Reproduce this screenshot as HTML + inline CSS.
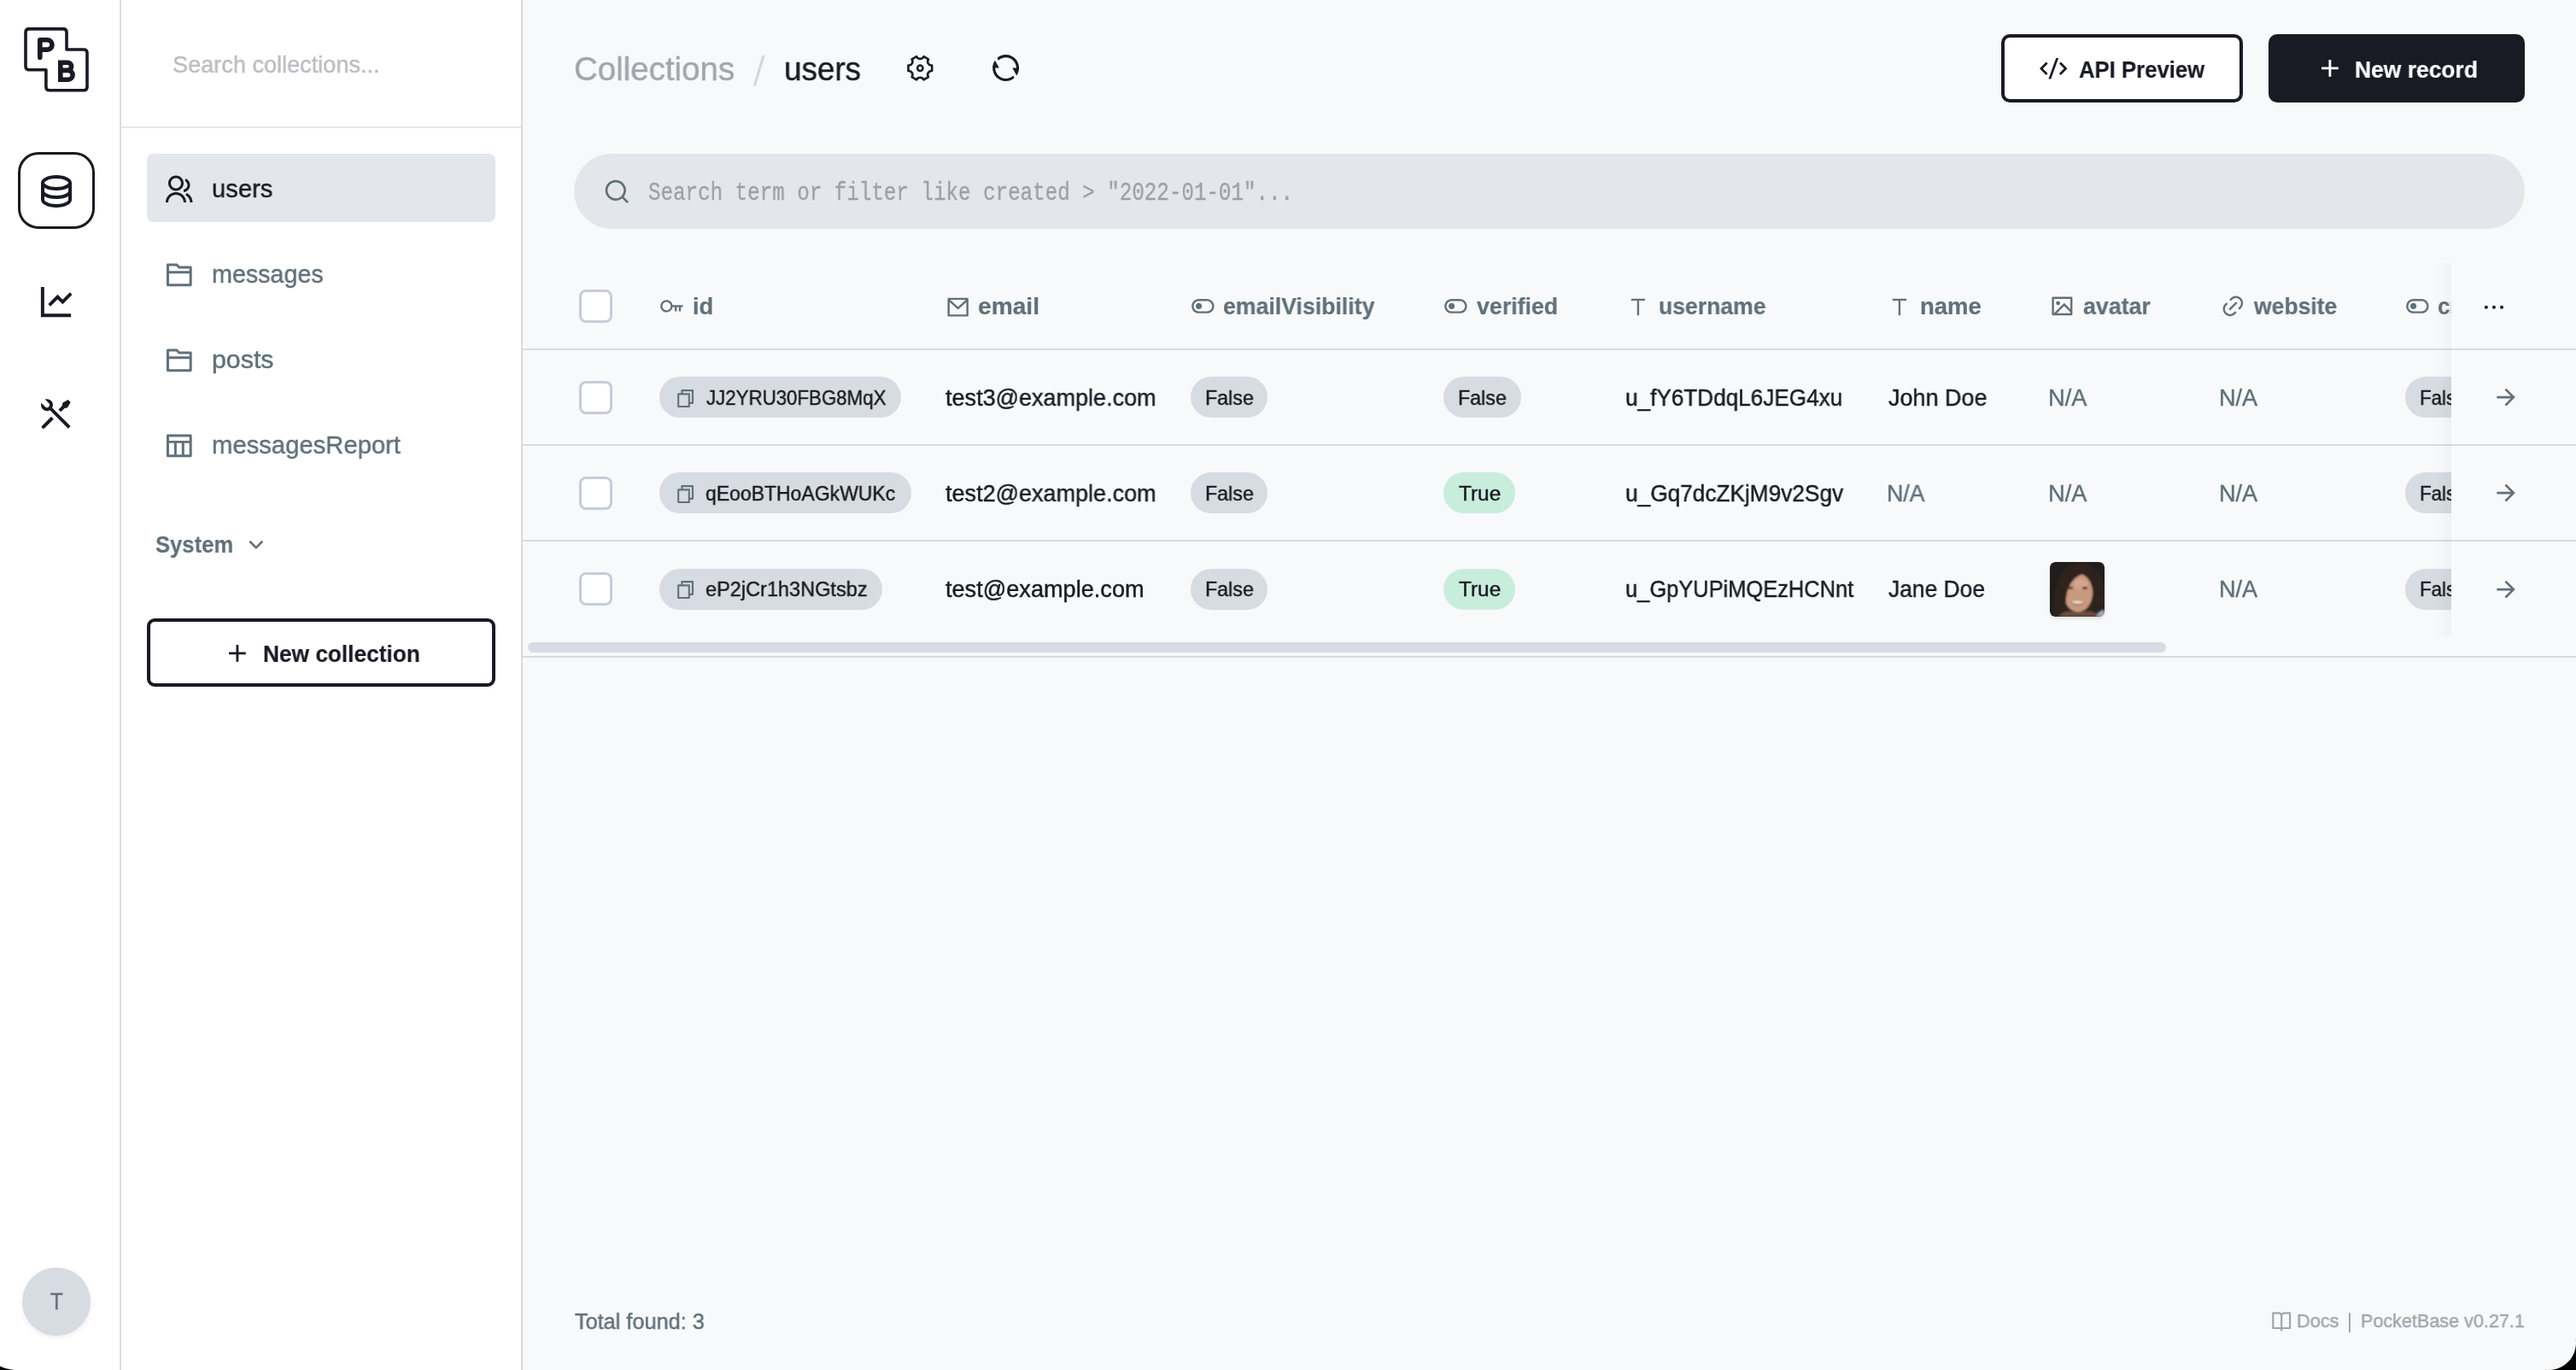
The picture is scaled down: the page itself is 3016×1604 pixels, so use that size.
<!DOCTYPE html>
<html><head><meta charset="utf-8"><title>PocketBase</title>
<style>
html,body{margin:0;padding:0;width:3016px;height:1604px;overflow:hidden;background:#f8f9fa}
#root{position:relative;width:3016px;height:1604px;overflow:hidden}
.b{position:absolute}
@media (max-width:2000px){html,body{width:1508px;height:802px} #root{zoom:0.5}}
.t{position:absolute;white-space:nowrap;font-family:"Liberation Sans",sans-serif;will-change:transform}
</style></head><body><div id="root">
<div class="b" style="left:0px;top:0px;width:3016px;height:1604px;background:#f8f9fa"></div>
<div class="b" style="left:0px;top:0px;width:140px;height:1604px;background:#fff"></div>
<div class="b" style="left:140px;top:0px;width:2px;height:1604px;background:#d7dce2"></div>
<div class="b" style="left:142px;top:0px;width:468px;height:1604px;background:#fff"></div>
<div class="b" style="left:610px;top:0px;width:2px;height:1604px;background:#d7dce2"></div>
<div class="b" style="left:142px;top:148px;width:468px;height:2px;background:#e3e7eb"></div>
<svg class="b" style="left:26px;top:30px" width="80" height="80" viewBox="26 30 80 80"><path d="M34 33.9H74Q78 33.9 78 37.9V58H98Q102 58 102 62V101.8Q102 105.8 98 105.8H57.9Q53.9 105.8 53.9 101.8V81.7H34Q30 81.7 30 77.7V37.9Q30 33.9 34 33.9Z" fill="none" stroke="#1a1a24" stroke-width="3.6" stroke-linejoin="round"/><path d="M46.8,67.2 V46.8 H55.35 A5.65,5.65 0 0 1 55.35,58.1 H46.8" fill="none" stroke="#1a1a24" stroke-width="5.6" stroke-linecap="round" stroke-linejoin="round"/><path d="M70.8,73.2 H79 A4.6,4.6 0 0 1 79,82.4 H79.7 A5.4,5.4 0 0 1 79.7,93.2 H70.8 Z M70.8,82.4 H80" fill="none" stroke="#1a1a24" stroke-width="5.6" stroke-linejoin="miter"/></svg>
<div class="b" style="left:21px;top:178px;width:90px;height:90px;box-sizing:border-box;border:3.6px solid #1a1a24;border-radius:24px"></div>
<svg class="b" style="left:42px;top:199.3px;" width="48.0" height="48.0" viewBox="0 0 24 24"><path fill="#1a1a24" d="M5 12.5C5 12.8134 5.46101 13.3584 6.53047 13.8931C7.91405 14.5849 9.87677 15 12 15C14.1232 15 16.0859 14.5849 17.4695 13.8931C18.539 13.3584 19 12.8134 19 12.5V10.3287C17.35 11.3482 14.8273 12 12 12C9.17273 12 6.65 11.3482 5 10.3287V12.5ZM19 15.3287C17.35 16.3482 14.8273 17 12 17C9.17273 17 6.65 16.3482 5 15.3287V17.5C5 17.8134 5.46101 18.3584 6.53047 18.8931C7.91405 19.5849 9.87677 20 12 20C14.1232 20 16.0859 19.5849 17.4695 18.8931C18.539 18.3584 19 17.8134 19 17.5V15.3287ZM3 17.5V7.5C3 5.01472 7.02944 3 12 3C16.9706 3 21 5.01472 21 7.5V17.5C21 19.9853 16.9706 22 12 22C7.02944 22 3 19.9853 3 17.5ZM12 10C14.1232 10 16.0859 9.58492 17.4695 8.89313C18.539 8.35836 19 7.81344 19 7.5C19 7.18656 18.539 6.64164 17.4695 6.10687C16.0859 5.41508 14.1232 5 12 5C9.87677 5 7.91405 5.41508 6.53047 6.10687C5.46101 6.64164 5 7.18656 5 7.5C5 7.81344 5.46101 8.35836 6.53047 8.89313C7.91405 9.58492 9.87677 10 12 10Z"/></svg>
<svg class="b" style="left:41.6px;top:330px;" width="47.04" height="47.04" viewBox="0 0 24 24"><path fill="#1a1a24" d="M5 3V19H21V21H3V3H5ZM20.2929 6.29289L21.7071 7.70711L16 13.4142L13 10.415L8.70711 14.7071L7.29289 13.2929L13 7.58579L16 10.585L20.2929 6.29289Z"/></svg>
<svg class="b" style="left:42.4px;top:460.7px;" width="48.0" height="48.0" viewBox="0 0 24 24"><path fill="#1a1a24" d="M5.32943 3.27158C6.56252 2.8332 7.9923 3.10749 8.97927 4.09446C10.1002 5.21537 10.3019 6.90741 9.58451 8.23385L20.2955 18.9449L18.8813 20.3591L8.17024 9.64809C6.84371 10.3654 5.15167 10.1637 4.03076 9.04278C3.04355 8.05557 2.76938 6.62537 3.20826 5.39208L5.44409 7.62791C6.02988 8.2137 6.97963 8.2137 7.56541 7.62791C8.1512 7.04213 8.1512 6.09238 7.56541 5.50659L5.32943 3.27158ZM15.6968 5.30737L18.8788 3.53963L20.293 4.95384L18.5252 8.13582L16.7574 8.49937L14.6361 10.6207L13.2219 9.20648L15.3432 7.08516L15.6968 5.30737ZM8.97927 13.4168L10.3935 14.831L5.09018 20.1343C4.69966 20.5248 4.06649 20.5248 3.67597 20.1343C3.31334 19.7717 3.28744 19.2 3.59826 18.8075L3.67597 18.7201L8.97927 13.4168Z"/></svg>
<div class="b" style="left:26px;top:1484px;width:80px;height:80px;border-radius:50%;background:#d7dce2;box-shadow:0 2px 6px rgba(0,0,0,0.08)"></div>
<div class="t" style="left:58.52px;top:1510.00px;font-size:27.5px;line-height:27.5px;color:#617079;font-weight:400;font-family:'Liberation Sans', sans-serif;transform:scaleX(0.8676);transform-origin:0 0;-webkit-text-stroke:0.45px #617079;">T</div>
<div class="t" style="left:201.78px;top:62.00px;font-size:28px;line-height:28px;color:#b9bdc2;font-weight:400;font-family:'Liberation Sans', sans-serif;transform:scaleX(0.9681);transform-origin:0 0;-webkit-text-stroke:0.45px #b9bdc2;">Search collections...</div>
<div class="b" style="left:172px;top:180px;width:408px;height:80px;background:#e3e7eb;border-radius:8px"></div>
<svg class="b" style="left:191.2px;top:204px;" width="36.0" height="36.0" viewBox="0 0 24 24"><path fill="#1a1a24" d="M2 22C2 17.5817 5.58172 14 10 14C14.4183 14 18 17.5817 18 22H16C16 18.6863 13.3137 16 10 16C6.68629 16 4 18.6863 4 22H2ZM10 13C6.685 13 4 10.315 4 7C4 3.685 6.685 1 10 1C13.315 1 16 3.685 16 7C16 10.315 13.315 13 10 13ZM10 11C12.21 11 14 9.21 14 7C14 4.79 12.21 3 10 3C7.79 3 6 4.79 6 7C6 9.21 7.79 11 10 11ZM18.2837 14.7028C21.0644 15.9561 23 18.752 23 22H21C21 19.564 19.5483 17.4671 17.4628 16.5271L18.2837 14.7028ZM17.5962 3.41321C19.5944 4.23703 21 6.20361 21 8.5C21 11.3702 18.8042 13.7252 16 13.9776V11.9646C17.6967 11.7222 19 10.264 19 8.5C19 7.11935 18.2016 5.92603 17.041 5.35635L17.5962 3.41321Z"/></svg>
<div class="t" style="left:247.95px;top:206.00px;font-size:30.2px;line-height:30.2px;color:#1a1a24;font-weight:400;font-family:'Liberation Sans', sans-serif;transform:scaleX(0.9665);transform-origin:0 0;-webkit-text-stroke:0.45px #1a1a24;">users</div>
<svg class="b" style="left:192px;top:303.5px;" width="35.64" height="35.64" viewBox="0 0 24 24"><path fill="#617079" d="M12.4142 5H21C21.5523 5 22 5.44772 22 6V20C22 20.5523 21.5523 21 21 21H3C2.44772 21 2 20.5523 2 20V4C2 3.44772 2.44772 3 3 3H10.4142L12.4142 5ZM20 11H4V19H20V11ZM20 9V7H11.5858L9.58579 5H4V9H20Z"/></svg>
<div class="t" style="left:247.94px;top:306.00px;font-size:30.2px;line-height:30.2px;color:#617079;font-weight:400;font-family:'Liberation Sans', sans-serif;transform:scaleX(0.9496);transform-origin:0 0;-webkit-text-stroke:0.45px #617079;">messages</div>
<svg class="b" style="left:192px;top:403.5px;" width="35.64" height="35.64" viewBox="0 0 24 24"><path fill="#617079" d="M12.4142 5H21C21.5523 5 22 5.44772 22 6V20C22 20.5523 21.5523 21 21 21H3C2.44772 21 2 20.5523 2 20V4C2 3.44772 2.44772 3 3 3H10.4142L12.4142 5ZM20 11H4V19H20V11ZM20 9V7H11.5858L9.58579 5H4V9H20Z"/></svg>
<div class="t" style="left:247.53px;top:406.00px;font-size:30.2px;line-height:30.2px;color:#617079;font-weight:400;font-family:'Liberation Sans', sans-serif;transform:scaleX(1.0049);transform-origin:0 0;-webkit-text-stroke:0.45px #617079;">posts</div>
<svg class="b" style="left:192px;top:503.5px;" width="35.64" height="35.64" viewBox="0 0 24 24"><path fill="#617079" d="M4 8H20V5H4V8ZM14 19V10H10V19H14ZM16 19H20V10H16V19ZM8 19V10H4V19H8ZM3 3H21C21.5523 3 22 3.44772 22 4V20C22 20.5523 21.5523 21 21 21H3C2.44772 21 2 20.5523 2 20V4C2 3.44772 2.44772 3 3 3Z"/></svg>
<div class="t" style="left:247.90px;top:506.00px;font-size:30.2px;line-height:30.2px;color:#617079;font-weight:400;font-family:'Liberation Sans', sans-serif;transform:scaleX(0.9684);transform-origin:0 0;-webkit-text-stroke:0.45px #617079;">messagesReport</div>
<div class="t" style="left:182.23px;top:624.00px;font-size:27.9px;line-height:27.9px;color:#617079;font-weight:700;font-family:'Liberation Sans', sans-serif;transform:scaleX(0.9183);transform-origin:0 0;-webkit-text-stroke:0.2px #617079;">System</div>
<svg class="b" style="left:283.6px;top:621.65px;" width="31.68" height="31.68" viewBox="0 0 24 24"><path fill="#617079" d="M11.9999 13.1714L16.9497 8.22168L18.3639 9.63589L11.9999 15.9999L5.63599 9.63589L7.0502 8.22168L11.9999 13.1714Z"/></svg>
<div class="b" style="left:172px;top:724px;width:408px;height:80px;box-sizing:border-box;border:4px solid #1a1a24;border-radius:9px;background:#fff"></div>
<svg class="b" style="left:260.5px;top:747.5px;" width="33.839999999999996" height="33.839999999999996" viewBox="0 0 24 24"><path fill="#1a1a24" d="M11 11V5H13V11H19V13H13V19H11V13H5V11H11Z"/></svg>
<div class="t" style="left:307.79px;top:752.00px;font-size:27.8px;line-height:27.8px;color:#1a1a24;font-weight:700;font-family:'Liberation Sans', sans-serif;transform:scaleX(0.9444);transform-origin:0 0;-webkit-text-stroke:0.2px #1a1a24;">New collection</div>
<div class="t" style="left:672.18px;top:61.00px;font-size:39.5px;line-height:39.5px;color:#a0a6ac;font-weight:400;font-family:'Liberation Sans', sans-serif;transform:scaleX(0.9737);transform-origin:0 0;-webkit-text-stroke:0.45px #a0a6ac;">Collections</div>
<svg class="b" style="left:878px;top:62px" width="22" height="42" viewBox="878 62 22 42"><polygon points="892.3,65 895.7,65 884.9,100.4 882,100.4" fill="#d3d7db"/></svg>
<div class="t" style="left:918.01px;top:61.00px;font-size:39.5px;line-height:39.5px;color:#1a1a24;font-weight:400;font-family:'Liberation Sans', sans-serif;transform:scaleX(0.9317);transform-origin:0 0;-webkit-text-stroke:0.45px #1a1a24;">users</div>
<svg class="b" style="left:1055px;top:58px" width="45" height="45" viewBox="1055 58 45 45"><path d="M1091.15,76.60 L1091.15,83.00 A4.55,4.55 0 0 0 1087.00,90.19 L1081.45,93.39 A4.55,4.55 0 0 0 1073.15,93.39 L1067.60,90.19 A4.55,4.55 0 0 0 1063.45,83.00 L1063.45,76.60 A4.55,4.55 0 0 0 1067.60,69.41 L1073.15,66.21 A4.55,4.55 0 0 0 1081.45,66.21 L1087.00,69.41 A4.55,4.55 0 0 0 1091.15,76.60Z" fill="none" stroke="#1a1a24" stroke-width="2.6" stroke-linejoin="round"/><circle cx="1077.3" cy="79.8" r="3.2" fill="none" stroke="#1a1a24" stroke-width="2.5"/></svg>
<svg class="b" style="left:1159px;top:61.2px;" width="37.2" height="37.2" viewBox="0 0 24 24"><path fill="#1a1a24" d="M5.46257 4.43262C7.21556 2.91688 9.5007 2 12 2C17.5228 2 22 6.47715 22 12C22 14.1361 21.3302 16.1158 20.1892 17.7406L17 12H20C20 7.58172 16.4183 4 12 4C9.84982 4 7.89777 4.84827 6.46023 6.22842L5.46257 4.43262ZM18.5374 19.5674C16.7844 21.0831 14.4993 22 12 22C6.47715 22 2 17.5228 2 12C2 9.86386 2.66979 7.88416 3.8108 6.25944L7 12H4C4 16.4183 7.58172 20 12 20C14.1502 20 16.1022 19.1517 17.5398 17.7716L18.5374 19.5674Z"/></svg>
<div class="b" style="left:2343px;top:40px;width:283px;height:80px;box-sizing:border-box;border:4px solid #1a1a24;border-radius:10px;background:#fff"></div>
<svg class="b" style="left:2387.5px;top:63.95px;" width="32.496" height="32.496" viewBox="0 0 24 24"><path fill="#1a1a24" d="M24 12L18.3431 17.6569L16.9289 16.2426L21.1716 12L16.9289 7.75736L18.3431 6.34315L24 12ZM2.82843 12L7.07107 16.2426L5.65685 17.6569L0 12L5.65685 6.34315L7.07107 7.75736L2.82843 12ZM9.78845 21H7.66009L14.2116 3H16.3399L9.78845 21Z"/></svg>
<div class="t" style="left:2434.16px;top:68.00px;font-size:27.8px;line-height:27.8px;color:#1a1a24;font-weight:700;font-family:'Liberation Sans', sans-serif;transform:scaleX(0.9245);transform-origin:0 0;-webkit-text-stroke:0.2px #1a1a24;">API Preview</div>
<div class="b" style="left:2656px;top:40px;width:300px;height:80px;background:#1a1a24;border-radius:10px"></div>
<svg class="b" style="left:2711.2px;top:63.2px;" width="33.839999999999996" height="33.839999999999996" viewBox="0 0 24 24"><path fill="#fff" d="M11 11V5H13V11H19V13H13V19H11V13H5V11H11Z"/></svg>
<div class="t" style="left:2757.28px;top:68.00px;font-size:27.8px;line-height:27.8px;color:#fff;font-weight:700;font-family:'Liberation Sans', sans-serif;transform:scaleX(0.9509);transform-origin:0 0;-webkit-text-stroke:0.2px #fff;">New record</div>
<div class="b" style="left:672px;top:180px;width:2284px;height:88px;background:#e3e7eb;border-radius:44px"></div>
<svg class="b" style="left:706.1px;top:208.1px;" width="32.400000000000006" height="32.400000000000006" viewBox="0 0 24 24"><path fill="#617079" d="M18.031 16.6168L22.3137 20.8995L20.8995 22.3137L16.6168 18.031C15.0769 19.263 13.124 20 11 20C6.032 20 2 15.968 2 11C2 6.032 6.032 2 11 2C15.968 2 20 6.032 20 11C20 13.124 19.263 15.0769 18.031 16.6168ZM16.0247 15.8748C17.2475 14.6146 18 12.8956 18 11C18 7.1325 14.8675 4 11 4C7.1325 4 4 7.1325 4 11C4 14.8675 7.1325 18 11 18C12.8956 18 14.6146 17.2475 15.8748 16.0247L16.0247 15.8748Z"/></svg>
<div class="t" style="left:759.33px;top:212.00px;font-size:29.5px;line-height:29.5px;color:#9aa0a6;font-weight:400;font-family:'Liberation Mono', monospace;transform:scaleX(0.8202);transform-origin:0 0;-webkit-text-stroke:0.3px #9aa0a6;">Search term or filter like created &gt; "2022-01-01"...</div>
<div class="b" style="left:612px;top:408px;width:2404px;height:2px;background:#d7dce2"></div>
<div class="b" style="left:612px;top:520px;width:2404px;height:2px;background:#d7dce2"></div>
<div class="b" style="left:612px;top:632px;width:2404px;height:2px;background:#d7dce2"></div>
<div class="b" style="left:612px;top:768px;width:2404px;height:2px;background:#d7dce2"></div>
<div class="b" style="left:618px;top:752px;width:1918px;height:12px;background:#d7dce2;border-radius:6px"></div>
<div class="b" style="left:678px;top:338.5px;width:39px;height:39px;box-sizing:border-box;border:3.4px solid #c6cdd7;border-radius:8px;background:#fff"></div>
<svg class="b" style="left:772.2px;top:344.3px;" width="28.799999999999997" height="28.799999999999997" viewBox="0 0 24 24"><path fill="#617079" d="M12.917 13C12.441 15.837 9.973 18 7 18C3.686 18 1 15.314 1 12C1 8.686 3.686 6 7 6C9.973 6 12.441 8.163 12.917 11H23V13H21V17H19V13H17V17H15V13H12.917ZM7 16C9.209 16 11 14.209 11 12C11 9.791 9.209 8 7 8C4.791 8 3 9.791 3 12C3 14.209 4.791 16 7 16Z"/></svg>
<div class="t" style="left:811.08px;top:345.00px;font-size:27.1px;line-height:27.1px;color:#617079;font-weight:700;font-family:'Liberation Sans', sans-serif;transform:scaleX(1.0117);transform-origin:0 0;-webkit-text-stroke:0.2px #617079;">id</div>
<svg class="b" style="left:1106.6px;top:344.6px;" width="29.28" height="29.28" viewBox="0 0 24 24"><path fill="#617079" d="M3 3H21C21.5523 3 22 3.44772 22 4V20C22 20.5523 21.5523 21 21 21H3C2.44772 21 2 20.5523 2 20V4C2 3.44772 2.44772 3 3 3ZM20 7.23792L12.0718 14.338L4 7.21594V19H20V7.23792ZM4.51146 5L12.0619 11.662L19.501 5H4.51146Z"/></svg>
<div class="t" style="left:1144.87px;top:345.00px;font-size:27.1px;line-height:27.1px;color:#617079;font-weight:700;font-family:'Liberation Sans', sans-serif;transform:scaleX(1.0392);transform-origin:0 0;-webkit-text-stroke:0.2px #617079;">email</div>
<svg class="b" style="left:1393.6px;top:344.1px;" width="28.799999999999997" height="28.799999999999997" viewBox="0 0 24 24"><path fill="#617079" d="M8 7C5.23858 7 3 9.23858 3 12C3 14.7614 5.23858 17 8 17H16C18.7614 17 21 14.7614 21 12C21 9.23858 18.7614 7 16 7H8ZM8 5H16C19.866 5 23 8.13401 23 12C23 15.866 19.866 19 16 19H8C4.13401 19 1 15.866 1 12C1 8.13401 4.13401 5 8 5ZM8 15C6.34315 15 5 13.6569 5 12C5 10.3431 6.34315 9 8 9C9.65685 9 11 10.3431 11 12C11 13.6569 9.65685 15 8 15Z"/></svg>
<div class="t" style="left:1432.23px;top:345.00px;font-size:27.1px;line-height:27.1px;color:#617079;font-weight:700;font-family:'Liberation Sans', sans-serif;transform:scaleX(0.9844);transform-origin:0 0;-webkit-text-stroke:0.2px #617079;">emailVisibility</div>
<svg class="b" style="left:1689.6px;top:344.1px;" width="28.799999999999997" height="28.799999999999997" viewBox="0 0 24 24"><path fill="#617079" d="M8 7C5.23858 7 3 9.23858 3 12C3 14.7614 5.23858 17 8 17H16C18.7614 17 21 14.7614 21 12C21 9.23858 18.7614 7 16 7H8ZM8 5H16C19.866 5 23 8.13401 23 12C23 15.866 19.866 19 16 19H8C4.13401 19 1 15.866 1 12C1 8.13401 4.13401 5 8 5ZM8 15C6.34315 15 5 13.6569 5 12C5 10.3431 6.34315 9 8 9C9.65685 9 11 10.3431 11 12C11 13.6569 9.65685 15 8 15Z"/></svg>
<div class="t" style="left:1729.27px;top:345.00px;font-size:27.1px;line-height:27.1px;color:#617079;font-weight:700;font-family:'Liberation Sans', sans-serif;transform:scaleX(0.9868);transform-origin:0 0;-webkit-text-stroke:0.2px #617079;">verified</div>
<svg class="b" style="left:1904.0px;top:344.5px;" width="27.839999999999996" height="27.839999999999996" viewBox="0 0 24 24"><path fill="#617079" d="M13 6V21H11V6H5V4H19V6H13Z"/></svg>
<div class="t" style="left:1941.51px;top:345.00px;font-size:27.1px;line-height:27.1px;color:#617079;font-weight:700;font-family:'Liberation Sans', sans-serif;transform:scaleX(0.9803);transform-origin:0 0;-webkit-text-stroke:0.2px #617079;">username</div>
<svg class="b" style="left:2209.9px;top:344.5px;" width="27.839999999999996" height="27.839999999999996" viewBox="0 0 24 24"><path fill="#617079" d="M13 6V21H11V6H5V4H19V6H13Z"/></svg>
<div class="t" style="left:2248.31px;top:345.00px;font-size:27.1px;line-height:27.1px;color:#617079;font-weight:700;font-family:'Liberation Sans', sans-serif;transform:scaleX(1.0144);transform-origin:0 0;-webkit-text-stroke:0.2px #617079;">name</div>
<svg class="b" style="left:2399.7px;top:344.2px;" width="28.799999999999997" height="28.799999999999997" viewBox="0 0 24 24"><path fill="#617079" d="M4.828 21L4.808 21.02L4.787 21H2.992C2.444 21 2 20.555 2 20.007V3.993C2 3.445 2.455 3 2.992 3H21.008C21.556 3 22 3.445 22 3.993V20.007C22 20.555 21.545 21 21.008 21H4.828ZM20 15V5H4V19L14 9L20 15ZM20 17.828L14 11.828L6.828 19H20V17.828ZM8 11C6.895 11 6 10.105 6 9C6 7.895 6.895 7 8 7C9.105 7 10 7.895 10 9C10 10.105 9.105 11 8 11Z"/></svg>
<div class="t" style="left:2439.20px;top:345.00px;font-size:27.1px;line-height:27.1px;color:#617079;font-weight:700;font-family:'Liberation Sans', sans-serif;transform:scaleX(0.9870);transform-origin:0 0;-webkit-text-stroke:0.2px #617079;">avatar</div>
<svg class="b" style="left:2600.4px;top:344.3px;" width="28.799999999999997" height="28.799999999999997" viewBox="0 0 24 24"><path fill="#617079" d="M18.3638 15.5355L16.9496 14.1213L18.3638 12.7071C20.3164 10.7545 20.3164 7.58866 18.3638 5.63604C16.4112 3.68341 13.2453 3.68341 11.2927 5.63604L9.87849 7.05025L8.46428 5.63604L9.87849 4.22182C12.6122 1.48815 17.0443 1.48815 19.778 4.22182C22.5117 6.95549 22.5117 11.3876 19.778 14.1213L18.3638 15.5355ZM15.5353 18.364L14.1211 19.7782C11.3875 22.5118 6.95531 22.5118 4.22164 19.7782C1.48797 17.0445 1.48797 12.6123 4.22164 9.87868L5.63585 8.46446L7.05007 9.87868L5.63585 11.2929C3.68323 13.2455 3.68323 16.4113 5.63585 18.364C7.58847 20.3166 10.7543 20.3166 12.7069 18.364L14.1211 16.9497L15.5353 18.364ZM14.8282 7.75736L16.2425 9.17157L9.17139 16.2426L7.75717 14.8284L14.8282 7.75736Z"/></svg>
<div class="t" style="left:2639.13px;top:345.00px;font-size:27.1px;line-height:27.1px;color:#617079;font-weight:700;font-family:'Liberation Sans', sans-serif;transform:scaleX(0.9786);transform-origin:0 0;-webkit-text-stroke:0.2px #617079;">website</div>
<svg class="b" style="left:2816.2px;top:344.1px;" width="28.799999999999997" height="28.799999999999997" viewBox="0 0 24 24"><path fill="#617079" d="M8 7C5.23858 7 3 9.23858 3 12C3 14.7614 5.23858 17 8 17H16C18.7614 17 21 14.7614 21 12C21 9.23858 18.7614 7 16 7H8ZM8 5H16C19.866 5 23 8.13401 23 12C23 15.866 19.866 19 16 19H8C4.13401 19 1 15.866 1 12C1 8.13401 4.13401 5 8 5ZM8 15C6.34315 15 5 13.6569 5 12C5 10.3431 6.34315 9 8 9C9.65685 9 11 10.3431 11 12C11 13.6569 9.65685 15 8 15Z"/></svg>
<div class="t" style="left:2854.46px;top:345.00px;font-size:27.1px;line-height:27.1px;color:#617079;font-weight:700;font-family:'Liberation Sans', sans-serif;transform:scaleX(0.9600);transform-origin:0 0;-webkit-text-stroke:0.2px #617079;">created</div>
<div class="b" style="left:678px;top:445.8px;width:39px;height:39px;box-sizing:border-box;border:3.4px solid #c6cdd7;border-radius:8px;background:#fff"></div>
<div class="b" style="left:772px;top:441.3px;width:283px;height:48px;background:#d7dce2;border-radius:24px"></div>
<svg class="b" style="left:790.15px;top:453.7px;" width="25.200000000000003" height="25.200000000000003" viewBox="0 0 24 24"><path fill="#617079" d="M7 6V3C7 2.44772 7.44772 2 8 2H20C20.5523 2 21 2.44772 21 3V17C21 17.5523 20.5523 18 20 18H17V21C17 21.5523 16.5523 22 15.9993 22H4.00069C3.44803 22 3 21.5551 3 21L3.00261 7C3.00261 6.44772 3.45071 6 4.00325 6H7ZM5.00277 8L5.00001 20H15V8H5.00277ZM9 6H17V16H19V4H9V6Z"/></svg>
<div class="t" style="left:826.87px;top:454.00px;font-size:24.6px;line-height:24.6px;color:#1a1a24;font-weight:400;font-family:'Liberation Sans', sans-serif;transform:scaleX(0.9055);transform-origin:0 0;-webkit-text-stroke:0.45px #1a1a24;">JJ2YRU30FBG8MqX</div>
<div class="t" style="left:1107.09px;top:452.00px;font-size:27.1px;line-height:27.1px;color:#1a1a24;font-weight:400;font-family:'Liberation Sans', sans-serif;transform:scaleX(0.9969);transform-origin:0 0;-webkit-text-stroke:0.45px #1a1a24;">test3@example.com</div>
<div class="b" style="left:1394px;top:441.3px;width:90.4px;height:48px;background:#d7dce2;border-radius:24px"></div>
<div class="t" style="left:1410.74px;top:454.00px;font-size:24.3px;line-height:24.3px;color:#1a1a24;font-weight:400;font-family:'Liberation Sans', sans-serif;transform:scaleX(0.9561);transform-origin:0 0;-webkit-text-stroke:0.45px #1a1a24;">False</div>
<div class="b" style="left:1690px;top:441.3px;width:90.5px;height:48px;background:#d7dce2;border-radius:24px"></div>
<div class="t" style="left:1706.74px;top:454.00px;font-size:24.3px;line-height:24.3px;color:#1a1a24;font-weight:400;font-family:'Liberation Sans', sans-serif;transform:scaleX(0.9561);transform-origin:0 0;-webkit-text-stroke:0.45px #1a1a24;">False</div>
<div class="t" style="left:1902.90px;top:452.00px;font-size:27.1px;line-height:27.1px;color:#1a1a24;font-weight:400;font-family:'Liberation Sans', sans-serif;transform:scaleX(0.9645);transform-origin:0 0;-webkit-text-stroke:0.45px #1a1a24;">u_fY6TDdqL6JEG4xu</div>
<div class="t" style="left:2210.80px;top:452.00px;font-size:27.1px;line-height:27.1px;color:#1a1a24;font-weight:400;font-family:'Liberation Sans', sans-serif;transform:scaleX(0.9960);transform-origin:0 0;-webkit-text-stroke:0.45px #1a1a24;">John Doe</div>
<div class="t" style="left:2398.22px;top:452.00px;font-size:27.1px;line-height:27.1px;color:#617079;font-weight:400;font-family:'Liberation Sans', sans-serif;transform:scaleX(1.0034);transform-origin:0 0;-webkit-text-stroke:0.45px #617079;">N/A</div>
<div class="t" style="left:2598.34px;top:452.00px;font-size:27.1px;line-height:27.1px;color:#617079;font-weight:400;font-family:'Liberation Sans', sans-serif;transform:scaleX(0.9941);transform-origin:0 0;-webkit-text-stroke:0.45px #617079;">N/A</div>
<div class="b" style="left:2816px;top:441.3px;width:90px;height:48px;background:#d7dce2;border-radius:24px"></div>
<div class="t" style="left:2833.21px;top:454.00px;font-size:24.3px;line-height:24.3px;color:#1a1a24;font-weight:400;font-family:'Liberation Sans', sans-serif;transform:scaleX(0.9200);transform-origin:0 0;-webkit-text-stroke:0.45px #1a1a24;">False</div>
<div class="b" style="left:678px;top:557.7px;width:39px;height:39px;box-sizing:border-box;border:3.4px solid #c6cdd7;border-radius:8px;background:#fff"></div>
<div class="b" style="left:772px;top:553.2px;width:295px;height:48px;background:#d7dce2;border-radius:24px"></div>
<svg class="b" style="left:790.15px;top:565.6px;" width="25.200000000000003" height="25.200000000000003" viewBox="0 0 24 24"><path fill="#617079" d="M7 6V3C7 2.44772 7.44772 2 8 2H20C20.5523 2 21 2.44772 21 3V17C21 17.5523 20.5523 18 20 18H17V21C17 21.5523 16.5523 22 15.9993 22H4.00069C3.44803 22 3 21.5551 3 21L3.00261 7C3.00261 6.44772 3.45071 6 4.00325 6H7ZM5.00277 8L5.00001 20H15V8H5.00277ZM9 6H17V16H19V4H9V6Z"/></svg>
<div class="t" style="left:826.28px;top:566.00px;font-size:24.6px;line-height:24.6px;color:#1a1a24;font-weight:400;font-family:'Liberation Sans', sans-serif;transform:scaleX(0.9345);transform-origin:0 0;-webkit-text-stroke:0.45px #1a1a24;">qEooBTHoAGkWUKc</div>
<div class="t" style="left:1107.09px;top:564.00px;font-size:27.1px;line-height:27.1px;color:#1a1a24;font-weight:400;font-family:'Liberation Sans', sans-serif;transform:scaleX(0.9969);transform-origin:0 0;-webkit-text-stroke:0.45px #1a1a24;">test2@example.com</div>
<div class="b" style="left:1394px;top:553.2px;width:90.4px;height:48px;background:#d7dce2;border-radius:24px"></div>
<div class="t" style="left:1410.74px;top:566.00px;font-size:24.3px;line-height:24.3px;color:#1a1a24;font-weight:400;font-family:'Liberation Sans', sans-serif;transform:scaleX(0.9561);transform-origin:0 0;-webkit-text-stroke:0.45px #1a1a24;">False</div>
<div class="b" style="left:1690px;top:553.2px;width:83.5px;height:48px;background:#c9eddc;border-radius:24px"></div>
<div class="t" style="left:1707.81px;top:566.00px;font-size:24.3px;line-height:24.3px;color:#1a1a24;font-weight:400;font-family:'Liberation Sans', sans-serif;transform:scaleX(1.0041);transform-origin:0 0;-webkit-text-stroke:0.45px #1a1a24;">True</div>
<div class="t" style="left:1902.89px;top:564.00px;font-size:27.1px;line-height:27.1px;color:#1a1a24;font-weight:400;font-family:'Liberation Sans', sans-serif;transform:scaleX(0.9681);transform-origin:0 0;-webkit-text-stroke:0.45px #1a1a24;">u_Gq7dcZKjM9v2Sgv</div>
<div class="t" style="left:2209.06px;top:564.00px;font-size:27.1px;line-height:27.1px;color:#617079;font-weight:400;font-family:'Liberation Sans', sans-serif;transform:scaleX(0.9871);transform-origin:0 0;-webkit-text-stroke:0.45px #617079;">N/A</div>
<div class="t" style="left:2398.22px;top:564.00px;font-size:27.1px;line-height:27.1px;color:#617079;font-weight:400;font-family:'Liberation Sans', sans-serif;transform:scaleX(1.0034);transform-origin:0 0;-webkit-text-stroke:0.45px #617079;">N/A</div>
<div class="t" style="left:2598.34px;top:564.00px;font-size:27.1px;line-height:27.1px;color:#617079;font-weight:400;font-family:'Liberation Sans', sans-serif;transform:scaleX(0.9941);transform-origin:0 0;-webkit-text-stroke:0.45px #617079;">N/A</div>
<div class="b" style="left:2816px;top:553.2px;width:90px;height:48px;background:#d7dce2;border-radius:24px"></div>
<div class="t" style="left:2833.21px;top:566.00px;font-size:24.3px;line-height:24.3px;color:#1a1a24;font-weight:400;font-family:'Liberation Sans', sans-serif;transform:scaleX(0.9200);transform-origin:0 0;-webkit-text-stroke:0.45px #1a1a24;">False</div>
<div class="b" style="left:678px;top:670.1px;width:39px;height:39px;box-sizing:border-box;border:3.4px solid #c6cdd7;border-radius:8px;background:#fff"></div>
<div class="b" style="left:772px;top:665.6px;width:261px;height:48px;background:#d7dce2;border-radius:24px"></div>
<svg class="b" style="left:790.15px;top:678.0px;" width="25.200000000000003" height="25.200000000000003" viewBox="0 0 24 24"><path fill="#617079" d="M7 6V3C7 2.44772 7.44772 2 8 2H20C20.5523 2 21 2.44772 21 3V17C21 17.5523 20.5523 18 20 18H17V21C17 21.5523 16.5523 22 15.9993 22H4.00069C3.44803 22 3 21.5551 3 21L3.00261 7C3.00261 6.44772 3.45071 6 4.00325 6H7ZM5.00277 8L5.00001 20H15V8H5.00277ZM9 6H17V16H19V4H9V6Z"/></svg>
<div class="t" style="left:826.26px;top:678.00px;font-size:24.6px;line-height:24.6px;color:#1a1a24;font-weight:400;font-family:'Liberation Sans', sans-serif;transform:scaleX(0.9563);transform-origin:0 0;-webkit-text-stroke:0.45px #1a1a24;">eP2jCr1h3NGtsbz</div>
<div class="t" style="left:1107.09px;top:676.00px;font-size:27.1px;line-height:27.1px;color:#1a1a24;font-weight:400;font-family:'Liberation Sans', sans-serif;transform:scaleX(1.0012);transform-origin:0 0;-webkit-text-stroke:0.45px #1a1a24;">test@example.com</div>
<div class="b" style="left:1394px;top:665.6px;width:90.4px;height:48px;background:#d7dce2;border-radius:24px"></div>
<div class="t" style="left:1410.74px;top:678.00px;font-size:24.3px;line-height:24.3px;color:#1a1a24;font-weight:400;font-family:'Liberation Sans', sans-serif;transform:scaleX(0.9561);transform-origin:0 0;-webkit-text-stroke:0.45px #1a1a24;">False</div>
<div class="b" style="left:1690px;top:665.6px;width:83.5px;height:48px;background:#c9eddc;border-radius:24px"></div>
<div class="t" style="left:1707.81px;top:678.00px;font-size:24.3px;line-height:24.3px;color:#1a1a24;font-weight:400;font-family:'Liberation Sans', sans-serif;transform:scaleX(1.0041);transform-origin:0 0;-webkit-text-stroke:0.45px #1a1a24;">True</div>
<div class="t" style="left:1902.95px;top:676.00px;font-size:27.1px;line-height:27.1px;color:#1a1a24;font-weight:400;font-family:'Liberation Sans', sans-serif;transform:scaleX(0.9390);transform-origin:0 0;-webkit-text-stroke:0.45px #1a1a24;">u_GpYUPiMQEzHCNnt</div>
<div class="t" style="left:2210.80px;top:676.00px;font-size:27.1px;line-height:27.1px;color:#1a1a24;font-weight:400;font-family:'Liberation Sans', sans-serif;transform:scaleX(0.9741);transform-origin:0 0;-webkit-text-stroke:0.45px #1a1a24;">Jane Doe</div>
<svg class="b" style="left:2400px;top:658px;border-radius:6px;box-shadow:0 2px 4px rgba(0,0,0,0.12)" width="64" height="64" viewBox="0 0 64 64"><defs><filter id="bl" x="-10%" y="-10%" width="120%" height="120%"><feGaussianBlur stdDeviation="1.1"/></filter><clipPath id="cp"><rect width="64" height="64" rx="6"/></clipPath></defs><g clip-path="url(#cp)"><rect width="64" height="64" fill="#1f1e1d"/><g filter="url(#bl)"><path d="M6,64 Q2,40 10,20 Q18,2 36,1 Q56,2 62,24 Q66,44 62,64Z" fill="#2e241f"/><path d="M10,64 Q16,56 28,58 L40,58 Q52,56 58,64Z" fill="#6b4d3d"/><path d="M54,64 Q57,57 64,56 L64,64Z" fill="#a2aab4"/><ellipse cx="33" cy="36" rx="17" ry="22.5" fill="#c9997f"/><ellipse cx="36" cy="26" rx="8" ry="6" fill="#d4a58c"/><path d="M13,46 Q12,20 30,10 Q46,4 54,20 Q50,14 40,14 Q28,16 22,30 Q18,40 19,52Z" fill="#2e241f"/><path d="M48,14 Q54,24 52,44 L56,44 Q58,24 50,12Z" fill="#2e241f"/><ellipse cx="24" cy="30.5" rx="3.2" ry="1.4" fill="#3b2a22"/><ellipse cx="41" cy="30.5" rx="3.2" ry="1.4" fill="#3b2a22"/><ellipse cx="32.5" cy="48" rx="7.5" ry="3" fill="#a8736a"/><ellipse cx="32.5" cy="47.2" rx="6.5" ry="1.6" fill="#f0e6d4"/></g></g></svg>
<div class="t" style="left:2598.34px;top:676.00px;font-size:27.1px;line-height:27.1px;color:#617079;font-weight:400;font-family:'Liberation Sans', sans-serif;transform:scaleX(0.9941);transform-origin:0 0;-webkit-text-stroke:0.45px #617079;">N/A</div>
<div class="b" style="left:2816px;top:665.6px;width:90px;height:48px;background:#d7dce2;border-radius:24px"></div>
<div class="t" style="left:2833.21px;top:678.00px;font-size:24.3px;line-height:24.3px;color:#1a1a24;font-weight:400;font-family:'Liberation Sans', sans-serif;transform:scaleX(0.9200);transform-origin:0 0;-webkit-text-stroke:0.45px #1a1a24;">False</div>
<div class="b" style="left:2852px;top:308px;width:18px;height:437px;background:linear-gradient(to right, rgba(0,0,0,0), rgba(0,0,0,0.03))"></div>
<div class="b" style="left:2870px;top:308px;width:146px;height:437px;background:#f8f9fa"></div>
<div class="b" style="left:2870px;top:408px;width:146px;height:2px;background:#d7dce2"></div>
<div class="b" style="left:2870px;top:520px;width:146px;height:2px;background:#d7dce2"></div>
<div class="b" style="left:2870px;top:632px;width:146px;height:2px;background:#d7dce2"></div>
<svg class="b" style="left:2900px;top:350px" width="40" height="20" viewBox="2900 350 40 20"><circle cx="2910.9" cy="359.7" r="2.05" fill="#1a1a24"/><circle cx="2919.95" cy="359.7" r="2.05" fill="#1a1a24"/><circle cx="2929" cy="359.7" r="2.05" fill="#1a1a24"/></svg>
<svg class="b" style="left:2917.6px;top:449.2px;" width="32.160000000000004" height="32.160000000000004" viewBox="0 0 24 24"><path fill="#617079" d="M16.1716 10.9999L10.8076 5.63589L12.2218 4.22168L20 11.9999L12.2218 19.778L10.8076 18.3638L16.1716 12.9999H4V10.9999H16.1716Z"/></svg>
<svg class="b" style="left:2917.6px;top:561.1px;" width="32.160000000000004" height="32.160000000000004" viewBox="0 0 24 24"><path fill="#617079" d="M16.1716 10.9999L10.8076 5.63589L12.2218 4.22168L20 11.9999L12.2218 19.778L10.8076 18.3638L16.1716 12.9999H4V10.9999H16.1716Z"/></svg>
<svg class="b" style="left:2917.6px;top:673.5px;" width="32.160000000000004" height="32.160000000000004" viewBox="0 0 24 24"><path fill="#617079" d="M16.1716 10.9999L10.8076 5.63589L12.2218 4.22168L20 11.9999L12.2218 19.778L10.8076 18.3638L16.1716 12.9999H4V10.9999H16.1716Z"/></svg>
<div class="t" style="left:672.99px;top:1534.00px;font-size:26.5px;line-height:26.5px;color:#617079;font-weight:400;font-family:'Liberation Sans', sans-serif;transform:scaleX(0.9534);transform-origin:0 0;-webkit-text-stroke:0.45px #617079;">Total found: 3</div>
<svg class="b" style="left:2657.8px;top:1533.2px;" width="26.400000000000002" height="26.400000000000002" viewBox="0 0 24 24"><path fill="#a0a6ac" d="M13 21V23H11V21H3C2.44772 21 2 20.5523 2 20V4C2 3.44772 2.44772 3 3 3H9C10.1947 3 11.2671 3.52375 12 4.35418C12.7329 3.52375 13.8053 3 15 3H21C21.5523 3 22 3.44772 22 4V20C22 20.5523 21.5523 21 21 21H13ZM20 19V5H15C13.8954 5 13 5.89543 13 7V19H20ZM11 19V7C11 5.89543 10.1046 5 9 5H4V19H11Z"/></svg>
<div class="t" style="left:2688.56px;top:1535.00px;font-size:22.7px;line-height:22.7px;color:#a0a6ac;font-weight:400;font-family:'Liberation Sans', sans-serif;transform:scaleX(0.9584);transform-origin:0 0;-webkit-text-stroke:0.45px #a0a6ac;">Docs</div>
<div class="b" style="left:2750px;top:1537px;width:1.8px;height:23px;background:#a0a6ac"></div>
<div class="t" style="left:2763.67px;top:1535.00px;font-size:22.7px;line-height:22.7px;color:#a0a6ac;font-weight:400;font-family:'Liberation Sans', sans-serif;transform:scaleX(0.9509);transform-origin:0 0;-webkit-text-stroke:0.45px #a0a6ac;">PocketBase v0.27.1</div>
<div class="b" style="left:2980px;top:1568px;width:36px;height:36px;background:radial-gradient(circle at 4px 4px, transparent 31.5px, #000 32.5px)"></div>
<svg class="b" style="left:0;top:1596px" width="24" height="8" viewBox="0 1596 24 8"><path d="M0,1599.6 Q6,1603 17,1604 L0,1604Z" fill="#000"/></svg>
</div></body></html>
